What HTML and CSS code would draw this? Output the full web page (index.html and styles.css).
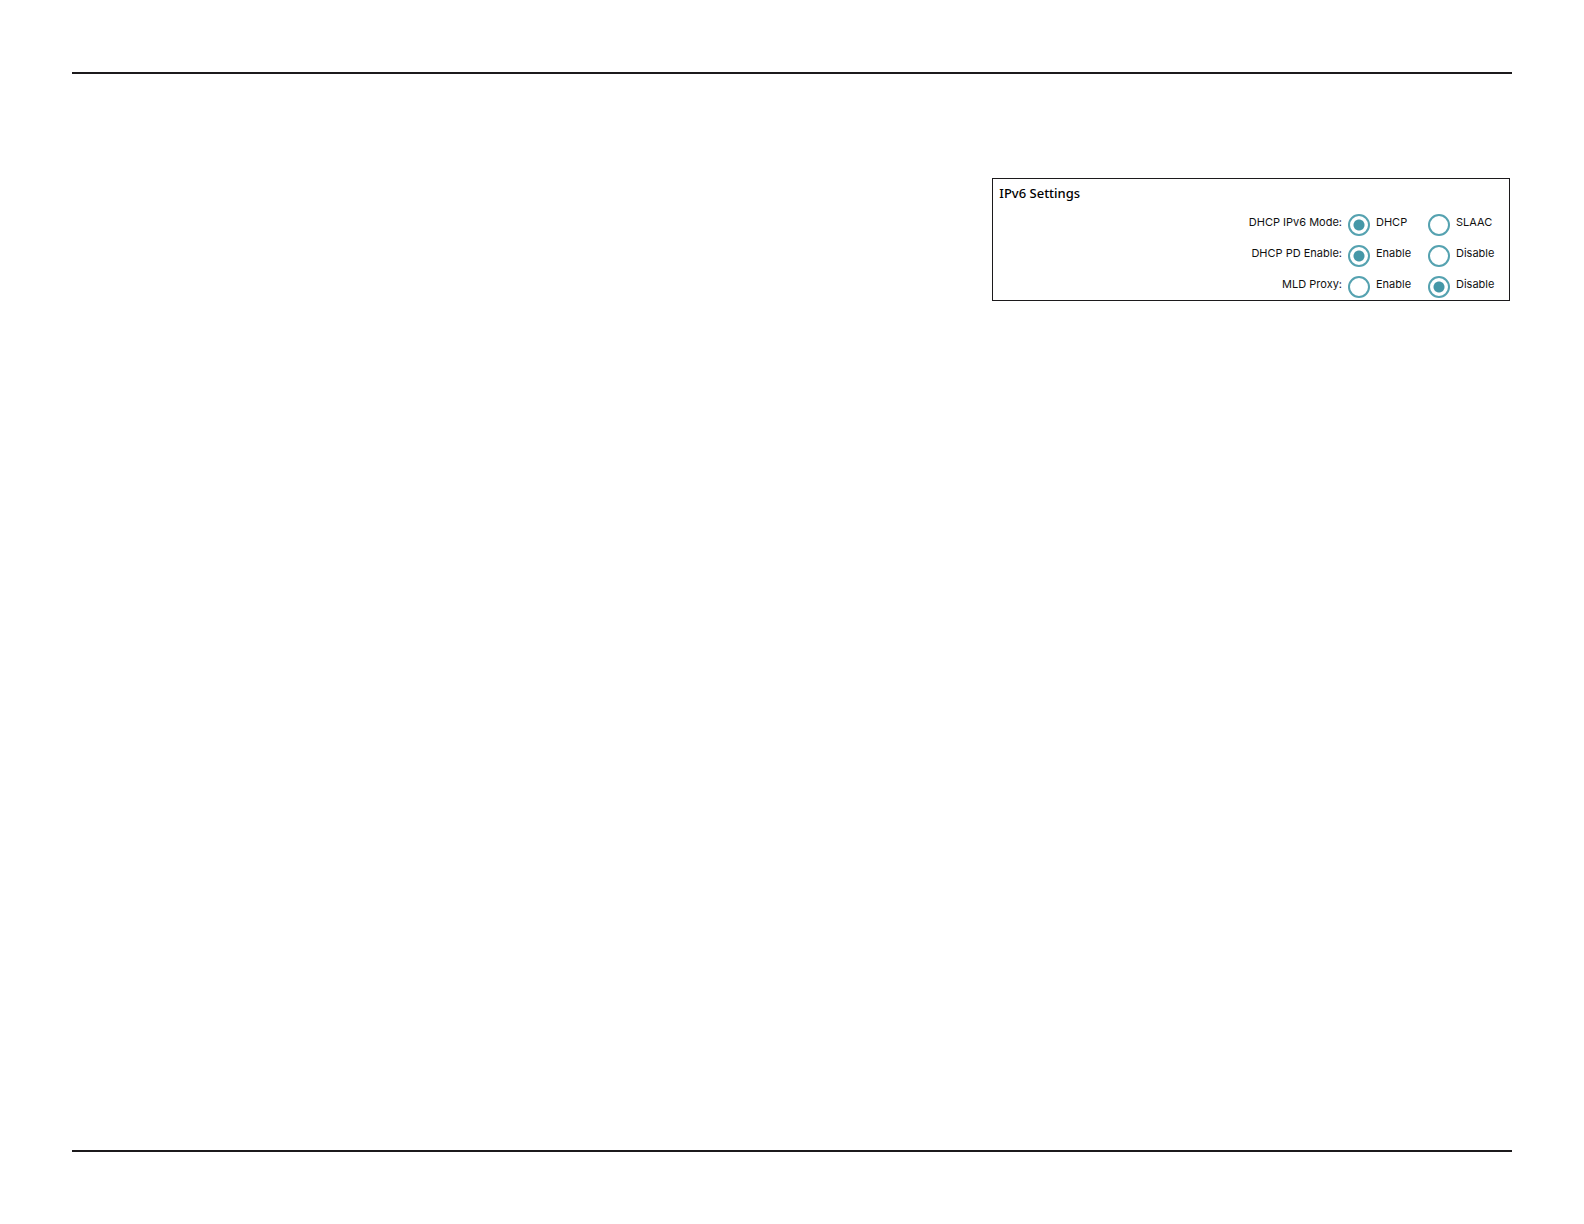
FILE: index.html
```html
<!DOCTYPE html>
<html lang="en">
<head>
<meta charset="utf-8">
<title>IPv6 Settings</title>
<link rel="stylesheet" href="styles.css">
</head>
<body>
<main class="sheet">
  <form class="panel">
    <h1 class="panel-title">IPv6 Settings</h1>
    <div class="row" role="radiogroup" aria-labelledby="mode-label">
      <span class="row-label" id="mode-label">DHCP IPv6 Mode:</span>
      <label class="option"><input class="radio" type="radio" name="mode" checked>DHCP</label>
      <label class="option"><input class="radio" type="radio" name="mode">SLAAC</label>
    </div>
    <div class="row" role="radiogroup" aria-labelledby="pd-label">
      <span class="row-label" id="pd-label">DHCP PD Enable:</span>
      <label class="option"><input class="radio" type="radio" name="pd" checked>Enable</label>
      <label class="option"><input class="radio" type="radio" name="pd">Disable</label>
    </div>
    <div class="row" role="radiogroup" aria-labelledby="mld-label">
      <span class="row-label" id="mld-label">MLD Proxy:</span>
      <label class="option"><input class="radio" type="radio" name="mld">Enable</label>
      <label class="option"><input class="radio" type="radio" name="mld" checked>Disable</label>
    </div>
  </form>
</main>
</body>
</html>
```
FILE: styles.css
```css
* {
  box-sizing: border-box;
}

body {
  margin: 0;
  padding: 72px;
  min-height: 100vh;
  display: flex;
  background: #fff;
  color: #111;
  font: 11px/16px Inter, sans-serif;
}

.sheet {
  flex: 1;
  display: flex;
  justify-content: flex-end;
  align-items: flex-start;
  padding: 104px 2px 104px 0;
  border-top: 2px solid #1c1a1c;
  border-bottom: 2px solid #1c1a1c;
}

.panel {
  flex: 0 1 36%;
  min-width: 320px;
  display: flex;
  flex-direction: column;
  gap: 9px;
  padding: 4px 1px 2px 6px;
  border: 1px solid #1c1a1c;
}

.panel-title {
  margin: 0 0 2px;
  font-family: "Noto Sans", sans-serif;
  font-size: 13px;
  line-height: 20px;
  font-weight: 500;
  color: #000;
}

.row {
  display: grid;
  grid-template-columns: 1fr 80px 80px;
}

.row-label {
  padding-right: 6px;
  text-align: right;
}

.option {
  display: flex;
  align-items: flex-start;
  gap: 6px;
}

.radio {
  appearance: none;
  flex: none;
  width: 22px;
  height: 22px;
  margin: 0;
  border: 2px solid #55a2b0;
  border-radius: 50%;
  background: #fff;
}

.radio:checked {
  background: radial-gradient(circle, #4597a7 5px, #fff 6px);
}
```
